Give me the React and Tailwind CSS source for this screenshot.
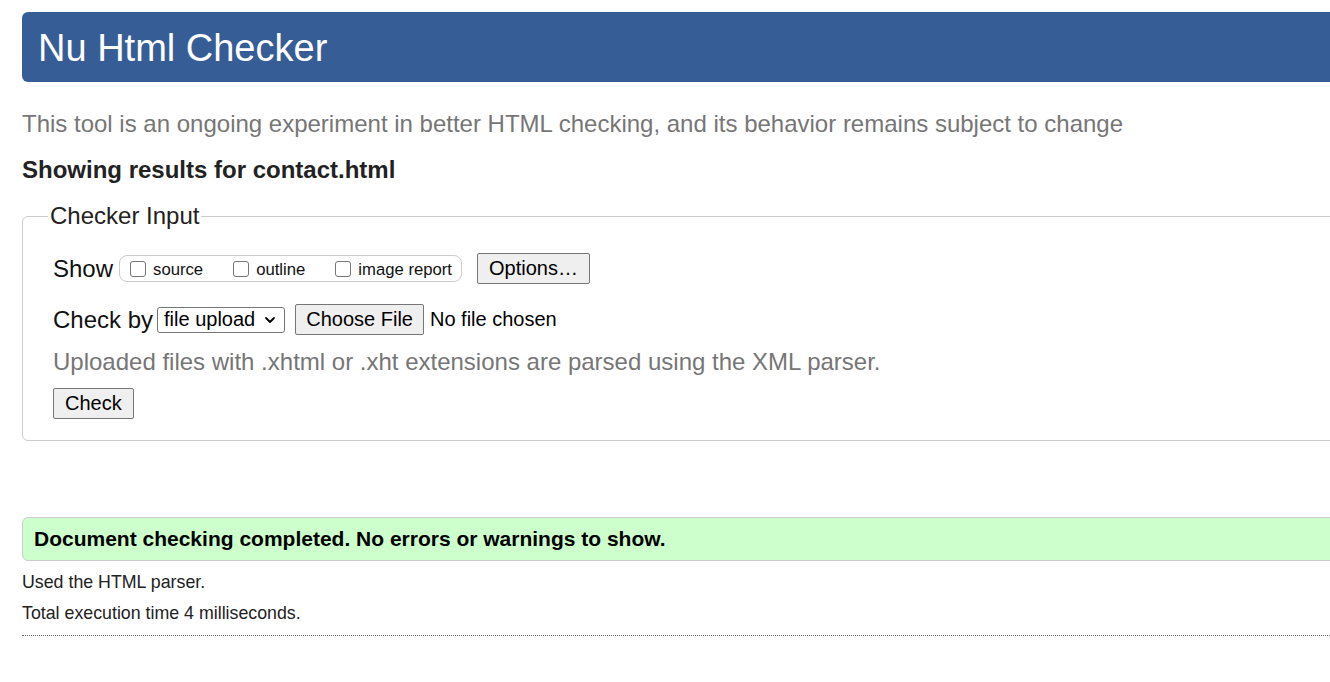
import { ChevronDown } from "lucide-react";

const font = "font-['Liberation_Sans',Arial,sans-serif]";

const Box = ({ label }) => (
  <label className="flex items-center">
    <input
      type="checkbox"
      className="h-[16px] w-[16px] shrink-0 appearance-none rounded-[3px] border border-[#767676] bg-white"
    />
    <span className="ml-[7px] mt-[2px] text-[16.7px] leading-[20px] text-[#111]">{label}</span>
  </label>
);

const Btn = ({ children, className = "" }) => (
  <button
    className={`rounded-[2px] border border-[#767676] bg-[#efefef] text-[20px] leading-[23px] text-black ${className}`}
  >
    {children}
  </button>
);

export default function App() {
  return (
    <div className={`h-screen w-full overflow-hidden bg-white ${font}`}>
      <div className="w-[1440px] pl-[22px] pt-[12px]">
        <div className="flex h-[70px] items-center rounded-[6px] bg-[#365d95] pl-[16px] pt-[2px]">
          <h1 className="text-[38px] leading-[44px] text-white">Nu Html Checker</h1>
        </div>

        <p className="mt-[28px] text-[24px] leading-[28px] text-[#767676]">
          This tool is an ongoing experiment in better HTML checking, and its behavior remains subject to change
        </p>
        <p className="mt-[18px] text-[24px] font-bold leading-[28px] text-[#222]">
          Showing results for contact.html
        </p>

        <fieldset className="mt-[18px] rounded-[6px] border border-[#ccc] pb-[21px] pl-[30px] pt-[23px]">
          <legend className="-ml-[5px] px-[2px] text-[24px] leading-[28px] text-[#222]">Checker Input</legend>

          <div className="flex h-[31px] items-center">
            <span className="text-[24px] leading-[28px] text-[#111]">Show</span>
            <div className="ml-[6px] flex h-[27px] items-center gap-[30px] rounded-[8px] border border-[#ccc] pl-[10px] pr-[9px]">
              <Box label="source" />
              <Box label="outline" />
              <Box label="image report" />
            </div>
            <Btn className="ml-[15px] h-[31px] px-[11px]">Options…</Btn>
          </div>

          <div className="mt-[20px] flex h-[31px] items-center">
            <span className="text-[24px] leading-[28px] text-[#111]">Check by</span>
            <div className="ml-[4px] flex h-[26px] items-center rounded-[3px] border border-[#767676] bg-white pl-[6px] pr-[6px]">
              <span className="text-[20px] leading-[23px] text-black">file upload</span>
              <ChevronDown size={16} strokeWidth={2.75} className="ml-[7px] text-black" />
            </div>
            <Btn className="ml-[10px] h-[31px] px-[10px]">Choose File</Btn>
            <span className="ml-[6px] text-[20px] leading-[23px] text-black">No file chosen</span>
          </div>

          <p className="mt-[13px] text-[24px] leading-[28px] text-[#767676]">
            Uploaded files with .xhtml or .xht extensions are parsed using the XML parser.
          </p>

          <Btn className="mt-[12px] h-[31px] px-[11px]">Check</Btn>
        </fieldset>

        <div className="mt-[76px] flex h-[44px] items-center rounded-[6px] border border-[#ccc] bg-[#ccffcc] pl-[11px]">
          <p className="text-[21px] font-bold leading-[24px] text-black">
            Document checking completed. No errors or warnings to show.
          </p>
        </div>

        <p className="mt-[11px] text-[17.8px] leading-[20px] text-[#222]">Used the HTML parser.</p>
        <p className="mt-[11px] text-[17.8px] leading-[20px] text-[#222]">Total execution time 4 milliseconds.</p>
        <div className="mt-[12px] border-t border-dotted border-[#666]" />
      </div>
    </div>
  );
}
